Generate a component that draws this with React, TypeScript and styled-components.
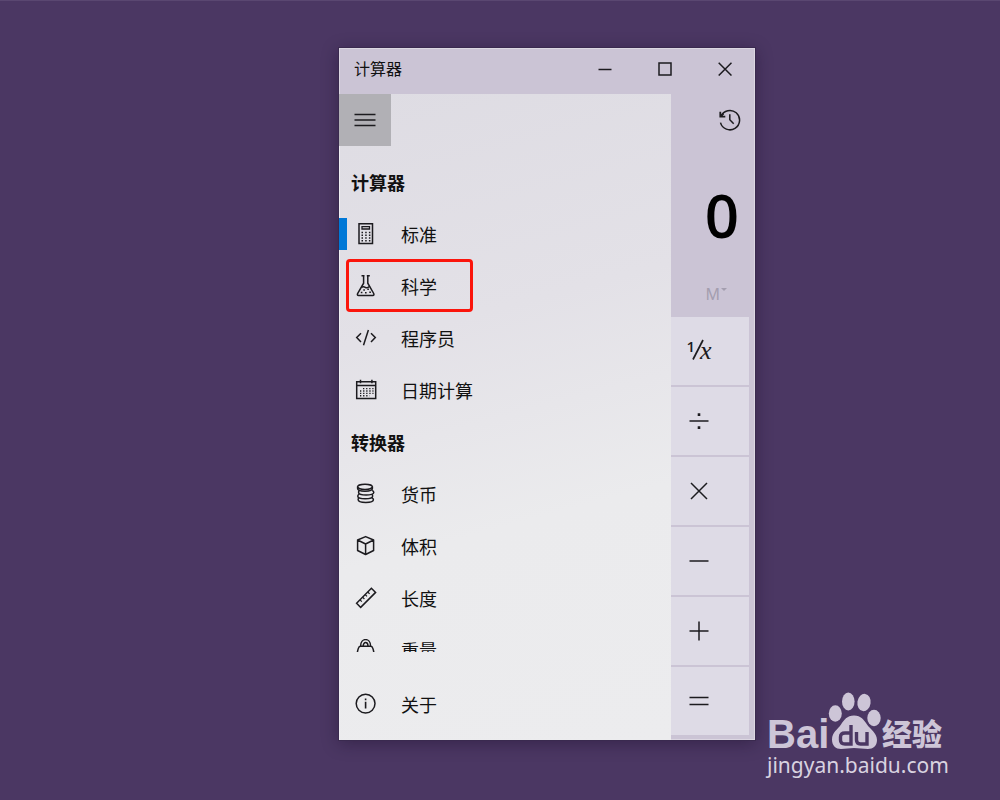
import React from "react";
import styled, { createGlobalStyle, css } from "styled-components";

const GlobalStyle = createGlobalStyle`
  *, *::before, *::after { box-sizing: border-box; }
  body {
    margin: 0;
    background: #4b3763;
    color: #111;
    font-family: "Noto Sans", "Noto Sans CJK SC", sans-serif;
  }
  button { font: inherit; color: inherit; border: 0; padding: 0; background: none; cursor: pointer; }
  svg { display: block; flex: none; }
`;

const Desktop = styled.div`
  display: grid;
  grid-template-columns: minmax(0, 339fr) 416px minmax(190px, 245fr);
  min-height: 100vh;
  padding-top: 47px;
  border-top: 1px solid #5a4771;
`;

const Window = styled.main`
  grid-column: 2;
  align-self: start;
  background: #cbc4d5;
  box-shadow: 0 0 0 1px #3a2a4f, 0 3px 16px rgba(20, 8, 36, 0.4), inset 1px 1px 0 #dcd7e2,
    inset -1px -1px 0 #dcd7e2;
`;

const TitleBar = styled.header`
  display: flex;
  align-items: flex-start;
  height: 46px;
  padding-left: 15px;
`;

const AppName = styled.h1`
  flex: 1;
  margin: 0;
  font: 400 16px/40px "Noto Sans CJK SC", sans-serif;
`;

const CaptionButton = styled.button`
  display: grid;
  place-items: center;
  width: 60px;
  height: 42px;
`;

const Body = styled.div`
  display: flex;
`;

const Menu = styled.nav`
  flex: 1;
  display: flex;
  flex-direction: column;
  background: linear-gradient(165deg, #dedce3 0%, #e3e1e7 35%, #ebebed 65%, #ececee 100%);
  box-shadow: inset 1px 0 0 #efedf2;
`;

const MenuToggle = styled.button`
  display: grid;
  place-items: center;
  width: 52px;
  height: 52px;
  background: #b1b0b5;
`;

const MenuScroll = styled.div`
  flex: 1 1 0;
  min-height: 0;
  overflow: hidden;
  padding-top: 10px;
`;

const MenuHeading = styled.h2`
  margin: 0;
  height: 52px;
  padding-left: 12px;
  font: 700 18px/52px "Noto Sans CJK SC", sans-serif;
`;

const MenuList = styled.ul`
  list-style: none;
  margin: 0;
  padding: 0;
`;

const MenuItem = styled.button<{ $current?: boolean; $marked?: boolean }>`
  position: relative;
  display: flex;
  align-items: center;
  gap: 24px;
  width: 100%;
  height: 52px;
  padding-left: 16px;
  font: 400 18px/52px "Noto Sans CJK SC", sans-serif;
  text-align: left;
  ${(p) =>
    p.$current &&
    css`
      &::before {
        content: "";
        position: absolute;
        left: 0;
        top: 10px;
        width: 8px;
        height: 32px;
        background: #0078d7;
      }
    `}
  ${(p) =>
    p.$marked &&
    css`
      &::after {
        content: "";
        position: absolute;
        left: 7px;
        top: -1px;
        width: 127px;
        height: 53px;
        border: 3px solid #fb150c;
        border-radius: 4px;
      }
    `}
`;

const MenuFooter = styled.div`
  padding: 26px 0 10px;
`;

const Pad = styled.section`
  width: 84px;
  padding: 0 6px 5px 0;
`;

const Display = styled.div`
  display: flex;
  flex-direction: column;
  align-items: flex-end;
  height: 223px;
`;

const HistoryButton = styled.button`
  display: grid;
  place-items: center;
  width: 38px;
  height: 52px;
`;

const Result = styled.output`
  padding-right: 10px;
  margin-top: 29px;
  font: 600 60px/80px "Open Sans", sans-serif;
  color: #000;
`;

const MemoryButton = styled.button`
  display: flex;
  gap: 1px;
  margin: 27px 22px 0 0;
  font-size: 16px;
  line-height: 24px;
  color: #a49eaf;
  svg { margin-top: 6px; }
`;

const Keys = styled.div`
  display: grid;
  grid-auto-rows: 68px;
  gap: 2px;
`;

const Key = styled.button`
  display: grid;
  place-items: center;
  padding-right: 22px;
  background: #dedbe6;
`;

const Watermark = styled.footer`
  grid-column: 3;
  align-self: end;
  padding: 0 0 20px 12px;
  color: #cdc5d7;
`;

const Brand = styled.div`
  display: flex;
  align-items: flex-end;
  white-space: nowrap;
`;

const BrandLatin = styled.span`
  width: 61px;
  font: 700 40px/32px "Liberation Sans", sans-serif;
`;

const BrandHan = styled.span`
  padding-left: 1px;
  font: 900 30px/36px "Noto Sans CJK SC", sans-serif;
`;

const SiteLink = styled.a`
  display: block;
  font: 400 21px/30px "Noto Sans", sans-serif;
  color: #d9d3e0;
  text-decoration: none;
`;

const Glyph = ({ size = 22, children }: { size?: number; children: React.ReactNode }) => (
  <svg
    width={size}
    height={size}
    viewBox={`0 0 ${size} ${size}`}
    fill="none"
    stroke="#1c1b1f"
    strokeWidth="1.5"
    aria-hidden="true"
  >
    {children}
  </svg>
);

const icons: Record<string, React.ReactNode> = {
  standard: (
    <>
      <path d="M4 .8h13.500v19.700H4z" />
      <path d="M7 3.700h7.500v2.300H7z" strokeWidth="1.300" />
      <path d="M6.500 9.500h9M6.500 12.300h9M6.500 15.100h9M6.500 17.700h9" strokeWidth="1.500" strokeDasharray="1.500 2.200" />
    </>
  ),
  science: (
    <>
      <path d="M6.500.8h3M11.800.8h3M8.600 1v7.200L2.600 18.500q-.8 1.700 1 1.900h14.200q1.700-.2.900-1.900L12.800 8.200V1" />
      <path d="M6.300 12.300q2-1.200 4 0t4.400-1" />
      <path d="M8.300 15h1.600M12.300 14.200h1.600M5.800 17.500h1.600M10 17.800h1.600M14.300 17.300h1.600" strokeWidth="1.600" />
    </>
  ),
  programmer: <path d="M6 6.200 1.700 10.600 6 15M16 6.200l4.300 4.400L16 15M13.400 3 8.500 18.300" />,
  date: (
    <>
      <path d="M1.700 2.800h19v16.700h-19zM1.700 6.600h19M5.500.8v3.400M16.900.8v3.400" />
      <path d="M8 9.600h10.500M5 12h13.500M5 14.400h13.500M5 16.800h9.500" strokeWidth="1.400" strokeDasharray="1.300 1.800" />
    </>
  ),
  currency: (
    <>
      <ellipse cx="10" cy="3.800" rx="7.400" ry="2.600" />
      <path d="M2.600 3.800v1.700c0 3.500 14.800 3.500 14.800 0V3.800" />
      <path d="M4.600 7.400c-1.400 1-1 1-1 2 0 3.400 15.200 3.400 15.200 0 0-1 0-1.200-1.600-2" />
      <path d="M4.200 11.200c-1.600 1-1.400 1-1.400 2 0 3.400 14.800 3.400 14.800 0 0-1 .2-1-.8-2" />
      <path d="M3.800 15c-1 .8-.6 1-.6 1.800 0 3.600 15.200 3.600 15.200 0 0-1-.2-1.400-1.400-2" />
    </>
  ),
  volume: <path d="M10.600 1.600 18.600 5v10.500l-8 4-8-4V5zM2.600 5l8 4 8-4M10.600 9v10.500" strokeLinejoin="round" />,
  length: (
    <>
      <path d="m1.600 16.200 14.800-15 4.200 4.200-14.900 15z" />
      <path d="m5 12.900 1.800 1.800M7.600 10.200l1.800 1.800M10.200 7.600l1.800 1.800M12.800 5l1.800 1.800" strokeWidth="1.200" />
    </>
  ),
  weight: (
    <>
      <path d="M1.800 19.700q.2-7 1.800-11 .5-1.500 2-1.500h10q1.500 0 2 1.500 1.600 4 1.800 11z" />
      <path d="M5.600 7.200c0-8.800 10-8.800 10 0M8.200 7.200c0-4.800 4.800-4.800 4.800 0" />
    </>
  ),
  about: (
    <>
      <circle cx="10.600" cy="10.600" r="9.400" />
      <path d="M10.600 8.800v6.700M10.600 5.500v1.700" strokeWidth="1.600" />
    </>
  ),
};

const calculators = [
  { id: "standard", label: "标准", current: true },
  { id: "science", label: "科学", marked: true },
  { id: "programmer", label: "程序员" },
  { id: "date", label: "日期计算" },
];

const converters = [
  { id: "currency", label: "货币" },
  { id: "volume", label: "体积" },
  { id: "length", label: "长度" },
  { id: "weight", label: "重量" },
];

type Entry = { id: string; label: string; current?: boolean; marked?: boolean };

const Entries = ({ items }: { items: Entry[] }) => (
  <MenuList>
    {items.map((item) => (
      <li key={item.id}>
        <MenuItem type="button" $current={item.current} $marked={item.marked}>
          <Glyph>{icons[item.id]}</Glyph>
          {item.label}
        </MenuItem>
      </li>
    ))}
  </MenuList>
);

const Fraction = styled.span`
  display: flex;
  align-items: flex-start;
  color: #1c1b1f;
  svg { margin: 3px -5px 0 -4px; }
`;

const Numerator = styled.span`
  font: 600 15px/20px "Open Sans", sans-serif;
`;

const Variable = styled.i`
  font: italic 400 26px/30px "Liberation Serif", serif;
`;

const operators = [
  {
    label: "除",
    path: (
      <>
        <path d="M1.500 11h19" />
        <path d="M9.700 4.600h2.600M9.700 17.600h2.600" strokeWidth="2.600" />
      </>
    ),
  },
  { label: "乘", path: <path d="m3 3 16 16M19 3 3 19" /> },
  { label: "减", path: <path d="M1.500 11h19" /> },
  { label: "加", path: <path d="M1.500 11h19M11 1.500v19" /> },
  { label: "等于", path: <path d="M1.500 7.500h19M1.500 14.500h19" /> },
];

export default function App() {
  return (
    <>
      <GlobalStyle />
      <Desktop>
        <Window>
          <TitleBar>
            <AppName>计算器</AppName>
            <CaptionButton type="button" aria-label="最小化">
              <Glyph size={14}><path d="M.5 7.500h13" /></Glyph>
            </CaptionButton>
            <CaptionButton type="button" aria-label="最大化">
              <Glyph size={14}><path d="M1 1h12v12H1z" /></Glyph>
            </CaptionButton>
            <CaptionButton type="button" aria-label="关闭">
              <Glyph size={14}><path d="m.7.700 12.800 12.800m0-12.800L.7 13.500" /></Glyph>
            </CaptionButton>
          </TitleBar>
          <Body>
            <Menu>
              <MenuToggle type="button" aria-label="菜单">
                <Glyph><path d="M.5 5.500h21M.5 11h21M.5 16.500h21" /></Glyph>
              </MenuToggle>
              <MenuScroll>
                <MenuHeading>计算器</MenuHeading>
                <Entries items={calculators} />
                <MenuHeading>转换器</MenuHeading>
                <Entries items={converters} />
              </MenuScroll>
              <MenuFooter>
                <MenuItem type="button">
                  <Glyph>{icons.about}</Glyph>
                  关于
                </MenuItem>
              </MenuFooter>
            </Menu>
            <Pad>
              <Display>
                <HistoryButton type="button" aria-label="历史记录">
                  <Glyph>
                    <path d="M2 7.200a9.700 9.700 0 1 1-.5 6.400M10.800 5.200v5.600l3.900 4" />
                    <path d="M1.300 2.800v4.800h5M1.500 7.500l3-3" strokeWidth="1.800" />
                  </Glyph>
                </HistoryButton>
                <Result>0</Result>
                <MemoryButton type="button" aria-label="存储器">
                  M
                  <svg width="6" height="4" viewBox="0 0 6 4"><path d="M0 0h6L3 3z" fill="#a49eaf" /></svg>
                </MemoryButton>
              </Display>
              <Keys>
                <Key type="button" aria-label="倒数">
                  <Fraction>
                    <Numerator>1</Numerator>
                    <svg width="14" height="22" viewBox="0 0 14 22" aria-hidden="true">
                      <path d="M12 1 2 20.500" stroke="#1c1b1f" strokeWidth="1.700" />
                    </svg>
                    <Variable>x</Variable>
                  </Fraction>
                </Key>
                {operators.map((op) => (
                  <Key key={op.label} type="button" aria-label={op.label}>
                    <Glyph>{op.path}</Glyph>
                  </Key>
                ))}
              </Keys>
            </Pad>
          </Body>
        </Window>
        <Watermark>
          <Brand>
            <BrandLatin>Bai</BrandLatin>
            <svg width="53" height="58" viewBox="0 0 53 58" fill="#cdc5d7" aria-hidden="true">
              <ellipse cx="7.300" cy="21.500" rx="6.500" ry="8.300" />
              <ellipse cx="20.300" cy="9.500" rx="6.300" ry="9" />
              <ellipse cx="36" cy="10.500" rx="6.600" ry="8.700" transform="rotate(8 36 10.500)" />
              <ellipse cx="46" cy="26" rx="6.700" ry="8.300" />
              <path d="M26 23.500c7 0 10 4.500 13 9s10 8.500 10 15.500c0 6-4 9-9 9-5 0-9-1-14-1s-8 1-13 1c-5 0-9-3-9-9.500 0-7 6-10.500 9-15 3-4.500 6-9 13-9z" />
              <g fill="none" stroke="#4b3763" strokeWidth="3.400">
                <path d="M23 33v19h-6q-4.500 0-4.500-4v-3q0-4 4.500-4h6M28.500 40v8q0 4 4 4h6.500V40" />
              </g>
            </svg>
            <BrandHan>经验</BrandHan>
          </Brand>
          <SiteLink href="#jingyan">jingyan.baidu.com</SiteLink>
        </Watermark>
      </Desktop>
    </>
  );
}
